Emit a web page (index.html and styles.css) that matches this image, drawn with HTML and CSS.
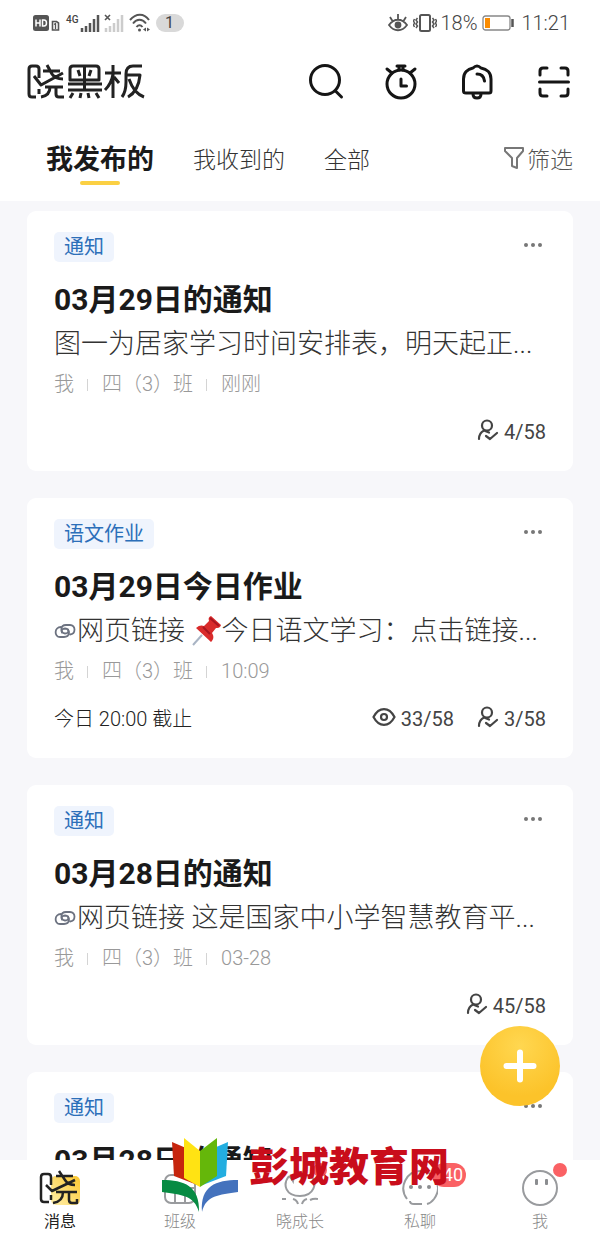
FILE: index.html
```html
<!DOCTYPE html>
<html lang="zh-CN">
<head>
<meta charset="utf-8">
<meta name="viewport" content="width=device-width, initial-scale=1">
<title>晓黑板</title>
<link rel="stylesheet" href="styles.css">
</head>
<body>
<svg class="defs" aria-hidden="true">
  <symbol id="person" viewBox="0 0 22 22"><g fill="none" stroke="currentColor" stroke-width="2.200" stroke-linecap="round" stroke-linejoin="round"><circle cx="10" cy="6.500" r="5"/><path d="M2 20c0-4 2-7 5-8.500l5 2M9 17l4 3 7-6"/></g></symbol>
  <symbol id="eye" viewBox="0 0 24 22"><g fill="none" stroke="currentColor" stroke-width="2.200"><path d="M1.500 11C7 .5 17 .5 22.500 11C17 21.500 7 21.500 1.500 11z"/><circle cx="12" cy="11" r="3"/></g></symbol>
  <symbol id="link" viewBox="0 0 22 18"><g fill="none" stroke="currentColor" stroke-width="1.800" stroke-linecap="round"><path d="M7 5C0 5 0 15 6 15h4c6 0 7-8 1-8.500c-3 0-4 2-3 4"/><path d="M16 12.500c6-.5 6-9.500 0-9.500h-4C6 3 6 11 11 11.500c3 0 4-2 3-4"/></g></symbol>
</svg>

<header class="header">
  <div class="status">
    <div class="status-group">
      <svg width="28" height="20" viewBox="0 0 28 20" fill="none"><rect x="1" y="2" width="16" height="16" rx="2.500" fill="#555"/><path d="M4 6.500v7M8 6.500v7M4 10h4M10.500 7v6h1.500c3.300 0 3.300-6 0-6z" stroke="#fff" stroke-width="1.500"/><path d="M20.500 17V8.500h4L26.500 10v7z" stroke="#555" stroke-width="1.600"/><path d="M22 11.500l1.500-1V16" stroke="#555" stroke-width="1.300"/></svg>
      <span class="net">4G</span>
      <svg width="20" height="20" viewBox="0 0 20 20" stroke="#555" stroke-width="2.500"><path d="M2 19v-4M6 19v-6M10 19V10M14 19V6M18 19V2"/></svg>
      <svg class="sim2" width="20" height="20" viewBox="0 0 20 20"><path d="M2 19v-4M6 19v-6M10 19V10M14 19V6M18 19V2" stroke="#ccc" stroke-width="2.500"/><path d="M1 2l5 5M6 2L1 7" stroke="#555" stroke-width="1.600"/></svg>
      <svg class="wifi" width="22" height="20" viewBox="0 0 22 20" fill="none" stroke="#555" stroke-width="2"><path d="M1 7C7 0 15 0 20 7M4 10.500c4-5 9-5 13 0M7.500 14c2-2.500 4-2.500 6 0"/><circle cx="10.500" cy="17" r="1.500" fill="#555" stroke="none"/><path d="M14 16.500l3-2v4zM21 16.500l-3-2v4z" fill="#555" stroke="none"/></svg>
      <span class="count">1</span>
    </div>
    <div class="status-group">
      <svg width="20" height="20" viewBox="0 0 20 20" fill="none" stroke="#555" stroke-width="1.800"><path d="M1 12C6 5 14 5 19 12C14 19 6 19 1 12zM10 6V1M4.500 8L2 4M15.500 8L18 4"/><circle cx="10" cy="12" r="2.500" fill="#555"/></svg>
      <svg class="vibrate" width="24" height="20" viewBox="0 0 24 20" fill="none" stroke="#555"><rect x="7" y="2" width="10" height="16" rx="1.500" stroke-width="2"/><path d="M4.500 5l-1.500 2 1.500 2-1.500 2 1.500 2-1.500 2M1.500 6L.5 8l1 2-1 2 1 2M19.500 5l1.500 2-1.500 2 1.500 2-1.500 2 1.500 2M22.500 6l1 2-1 2 1 2-1 2" stroke-width="1.500"/></svg>
      <span>18%</span>
      <svg class="battery" width="34" height="18" viewBox="0 0 34 18" fill="none"><rect x="2" y="2" width="27" height="14" rx="2.500" stroke="#888" stroke-width="1.300"/><rect x="4" y="4" width="5" height="10" fill="#fb8c00"/><path d="M31.500 5v8" stroke="#555" stroke-width="2.500"/></svg>
      <time>11:21</time>
    </div>
  </div>
  <div class="appbar">
    <h1 class="brand" aria-label="晓黑板">
      <svg width="119" height="36" viewBox="0 0 119 36" fill="none" stroke="#222" stroke-width="3" stroke-linejoin="round"><path d="M12 14V5Q12 2 9 2H5Q2 2 2 5v25q0 3 3 3h4M7 12l7 9L36 9M12 25v5M16 7h17M20 1l5 9q3 5 11 5M18 23h18M23 23c0 5-3 9-9 10M29 23v7q0 3 3 3h5"/><path d="M43 16V5q0-3 3-3h23q3 0 3 3v11zM57.500 2v23M51 6l2 6M64 6l-2 6M41 20h34M41 26h34M46 29l-3 5M54 29l-1 5M61 29l1 5M69 29l3 5"/><path d="M78 9h16M86 1v33M86 10c-1 7-3 11-8 16M87 13l5 6M115 2h-9q-7 0-7 8v8c0 7-1 11-4 15M99 11h14c-1 11-5 18-12 22M102 15c3 9 7 15 15 18"/></svg>
    </h1>
    <nav class="actions" aria-label="工具">
      <button aria-label="搜索"><svg width="36" height="36" viewBox="0 0 36 36"><circle cx="17" cy="16" r="14.500"/><path d="M27.500 27l6 6"/></svg></button>
      <button aria-label="计时"><svg width="36" height="36" viewBox="0 0 36 36"><circle cx="17" cy="20" r="14"/><path d="M17 15v7h5.500M13 2h8M15 3v3M19 3v3M3 5l5 4M31 5l-5 4"/></svg></button>
      <button aria-label="提醒"><svg width="36" height="36" viewBox="0 0 36 36"><path d="M3.500 27V15c0-6 4-10 9.500-11q4-4 8 0C27 5 31 9 31 15v12q0 2-2 2H6q-2.500 0-2.500-2zM17 10c5 0 7 3 7.500 7M13 30q0 4 4 4t4-4"/></svg></button>
      <button aria-label="扫一扫"><svg width="36" height="36" viewBox="0 0 36 36"><path d="M3.500 18h29M4 11V7q0-3 3-3h4M25 4h4q3 0 3 3v4M4 25v4q0 3 3 3h4M25 32h4q3 0 3-3v-4"/></svg></button>
    </nav>
  </div>
  <div class="tabs">
    <button class="tab active">我发布的</button>
    <button class="tab">我收到的</button>
    <button class="tab">全部</button>
    <button class="filter"><svg width="22" height="24" viewBox="0 0 22 24" fill="none" stroke="#777" stroke-width="2" stroke-linejoin="round"><path d="M2 2h18v3l-6 7v10l-5-2v-8L2 5z"/></svg>筛选</button>
  </div>
</header>

<main class="feed">
  <article class="card">
    <div class="card-top"><span class="tag">通知</span><button class="more" aria-label="更多"><i></i><i></i><i></i></button></div>
    <h2>03月29日的通知</h2>
    <p class="excerpt">图一为居家学习时间安排表，明天起正...</p>
    <p class="meta"><span>我</span><span>四（3）班</span><span>刚刚</span></p>
    <div class="stats"><span class="stat"><svg width="22" height="22"><use href="#person"/></svg>4/58</span></div>
  </article>
  <article class="card">
    <div class="card-top"><span class="tag">语文作业</span><button class="more" aria-label="更多"><i></i><i></i><i></i></button></div>
    <h2>03月29日今日作业</h2>
    <p class="excerpt"><a href="#"><svg width="22" height="18"><use href="#link"/></svg>网页链接</a> <svg class="pin" width="30" height="32" viewBox="0 0 30 32"><path d="M10 20L1 30" stroke="#a9b4c4" stroke-width="2"/><path d="M4 13c3-3 6-3 8-2l5-5c-1-3 0-4 2-5l10 9c-1 3-3 3-5 3l-4 5c2 3 2 6-1 9z" fill="#d92b2b"/><path d="M11 12l7 7M18 3l9 8" stroke="#a91620" stroke-width="2"/></svg>今日语文学习：点击链接...</p>
    <p class="meta"><span>我</span><span>四（3）班</span><span>10:09</span></p>
    <div class="stats"><span class="due">今日 20:00 截止</span><span class="stat"><svg width="24" height="22"><use href="#eye"/></svg>33/58</span><span class="stat"><svg width="22" height="22"><use href="#person"/></svg>3/58</span></div>
  </article>
  <article class="card">
    <div class="card-top"><span class="tag">通知</span><button class="more" aria-label="更多"><i></i><i></i><i></i></button></div>
    <h2>03月28日的通知</h2>
    <p class="excerpt"><a href="#"><svg width="22" height="18"><use href="#link"/></svg>网页链接</a> 这是国家中小学智慧教育平...</p>
    <p class="meta"><span>我</span><span>四（3）班</span><span>03-28</span></p>
    <div class="stats"><span class="stat"><svg width="22" height="22"><use href="#person"/></svg>45/58</span></div>
  </article>
  <article class="card">
    <div class="card-top"><span class="tag">通知</span><button class="more" aria-label="更多"><i></i><i></i><i></i></button></div>
    <h2>03月28日的通知</h2>
  </article>
</main>

<button class="fab" aria-label="新建"><svg width="34" height="34" viewBox="0 0 34 34"><path d="M17 3.500v27M3.500 17h27" stroke="#fff" stroke-width="6" stroke-linecap="round"/></svg></button>

<nav class="tabbar" aria-label="主导航">
  <a class="current" href="#"><span class="icon"><svg width="42" height="38" viewBox="0 0 42 38" fill="none" stroke="#222" stroke-width="2.500" stroke-linejoin="round"><defs><linearGradient id="gold" x1="0" y1="1" x2="1" y2="0"><stop offset="0" stop-color="#fff0ad"/><stop offset="1" stop-color="#fbc62e"/></linearGradient></defs><rect x="12" y="7" width="29" height="29" rx="5" fill="url(#gold)" stroke="none"/><path d="M12 16V8q0-3-3-3H5Q2 5 2 8v22q0 3 3 3h5M7 16l6 6 23-11M12 26v5M17 7h17M20 2l6 9q3 5 10 5M17 23h21M24 23c0 6-3 10-10 11M30 23v8q0 3 3 3h5v-4"/></svg></span>消息</a>
  <a href="#"><span class="icon"><svg width="36" height="36" viewBox="0 0 36 36"><rect x="3" y="5" width="30" height="28" rx="6"/><path d="M3 18h30M13 18v15M23 18v15"/></svg></span>班级</a>
  <a href="#"><span class="icon"><svg width="36" height="36" viewBox="0 0 36 36"><path d="M7 6C0 15 4 26 18 26S36 13 29 6M7 6q3 3 4 5q1-6 6-9q1 5 5 8M11 29q4 1 5 5M20 34q1-4 5-5M28 30q4-2 8-1M0 29h4"/></svg><b class="dot inner"></b></span>晓成长</a>
  <a href="#"><span class="icon"><svg width="36" height="36" viewBox="0 0 36 36"><path d="M5 29C-4 17 5 1 18 1s24 14 14 28q-3 4-7 5M8 31q0 3 4 3h8"/><g class="solid"><circle cx="9" cy="17" r="2"/><circle cx="18" cy="17" r="2"/><circle cx="27" cy="17" r="2"/></g></svg><b class="badge">40</b></span>私聊</a>
  <a href="#"><span class="icon"><svg width="36" height="36" viewBox="0 0 36 36"><circle cx="18" cy="18" r="17"/><g class="solid"><rect x="13" y="9" width="3" height="6" rx="1"/><rect x="23" y="9" width="3" height="6" rx="1"/></g></svg><b class="dot"></b></span>我</a>
</nav>

<div class="watermark">
  <svg width="76" height="74" viewBox="0 0 76 74"><path d="M10 4l28 12v32L12 38z" fill="#c6250d"/><path d="M66 4L38 16v32l26-10z" fill="#23aee0"/><path d="M22 0l16 13v36L22 40z" fill="#ffe313"/><path d="M55 0L38 13v36l17-11z" fill="#65b70a"/><path d="M0 42c22 0 38 6 37 32C32 57 20 57 0 54z" fill="#078b43"/><path d="M76 42c-22 0-38 6-36 32C44 57 57 57 76 54z" fill="#4472bd"/></svg>
  <span>彭城教育网</span>
</div>
</body>
</html>
```
FILE: styles.css
```css
* { box-sizing: border-box; }
body {
  margin: 0;
  height: 100vh;
  display: flex;
  flex-direction: column;
  position: relative;
  overflow: hidden;
  background: #f7f7fa;
  color: #333;
  font-family: Roboto, "Noto Sans CJK SC", sans-serif;
  font-weight: 300;
}
button { border: 0; padding: 0; background: none; font: inherit; color: inherit; cursor: pointer; }
a { color: inherit; text-decoration: none; }
h1, h2, p { margin: 0; }
svg { display: block; flex: none; }
.defs { position: absolute; width: 0; height: 0; }

.header { background: #fff; flex: none; }
.status {
  display: flex;
  justify-content: space-between;
  height: 46px;
  padding: 0 30px 0 32px;
  font-size: 20px;
  color: #444;
}
.status-group { display: flex; align-items: center; }
.net { margin: 0 1px 8px 6px; font-size: 10px; font-weight: 500; }
.sim2 { margin-left: 4px; }
.wifi { margin-left: 5px; }
.count {
  margin-left: 5px;
  width: 28px;
  border-radius: 9px;
  background: #d9d9d9;
  font-size: 16px;
  font-weight: 400;
  line-height: 18px;
  text-align: center;
}
.vibrate { margin: 0 3px 0 5px; }
.battery { margin: 0 6px 0 4px; }

.appbar {
  display: flex;
  align-items: center;
  justify-content: space-between;
  height: 72px;
  padding: 0 28px 0 27px;
}
.actions { display: flex; gap: 40px; }
.actions svg { fill: none; stroke: #151515; stroke-width: 3; stroke-linecap: round; stroke-linejoin: round; }

.tabs {
  display: flex;
  align-items: center;
  gap: 39px;
  height: 83px;
  padding: 0 27px 4px 46px;
  font-size: 23px;
}
.tab { height: 79px; }
.tab.active { position: relative; color: #1a1a1a; font-size: 27px; font-weight: 700; }
.tab.active::after {
  content: "";
  position: absolute;
  left: 50%;
  bottom: 12px;
  width: 40px;
  height: 4px;
  margin-left: -20px;
  border-radius: 2px;
  background: #fbd043;
}
.filter { display: flex; align-items: center; gap: 2px; margin-left: auto; color: #555; }

.feed {
  flex: 1;
  min-height: 0;
  overflow: hidden;
  display: flex;
  flex-direction: column;
  gap: 27px;
  padding: 10px 27px 0;
}
.card { flex: none; min-height: 260px; padding: 21px 27px 24px; border-radius: 9px; background: #fff; }
.card-top { display: flex; justify-content: space-between; align-items: flex-start; margin-bottom: 16px; }
.tag { padding: 0 10px; border-radius: 5px; background: #eff4fd; color: #2c6fb9; font-size: 20px; font-weight: 400; line-height: 30px; }
.more { display: flex; gap: 3px; padding: 11px 4px; }
.more i { width: 4px; height: 4px; border-radius: 50%; background: #777; }
.card h2 { color: #1a1a1a; font-size: 30px; font-weight: 700; line-height: 44px; }
.excerpt { font-size: 27px; line-height: 44px; white-space: nowrap; }
.excerpt svg { display: inline-block; vertical-align: middle; margin-top: -4px; }
.excerpt a svg { margin-right: 1px; color: #6c7280; }
.meta { display: flex; color: #999; font-size: 20px; line-height: 36px; }
.meta span + span::before {
  content: "";
  display: inline-block;
  width: 1px;
  height: 12px;
  margin: 0 14px 0 13px;
  background: #d4d4d4;
}
.stats {
  display: flex;
  justify-content: flex-end;
  gap: 23px;
  margin-top: 15px;
  color: #444;
  font-size: 20px;
  font-weight: 400;
  line-height: 30px;
}
.due { margin-right: auto; font-weight: 300; color: #222; }
.stat { display: flex; gap: 5px; }
.stat svg { margin-top: 2px; }

.fab {
  position: absolute;
  right: 40px;
  bottom: 140px;
  width: 80px;
  height: 80px;
  border-radius: 50%;
  background: radial-gradient(circle at 50% 25%, #ffd750, #fcc32a 70%);
  display: grid;
  place-items: center;
}

.tabbar { flex: none; display: grid; grid-template-columns: repeat(5, 1fr); height: 86px; background: #fff; }
.tabbar a {
  display: flex;
  flex-direction: column;
  align-items: center;
  padding-top: 6px;
  color: #888;
  font-size: 16px;
  line-height: 24px;
}
.tabbar .current { color: #222; font-weight: 400; }
.icon { position: relative; height: 44px; display: grid; place-items: center; }
.icon > svg { fill: none; }
.tabbar a:not(.current) svg { stroke: #999b9e; stroke-width: 2; }
.solid { fill: #8b8d90; stroke: none; }
.dot { position: absolute; top: -3px; right: -9px; width: 14px; height: 14px; border-radius: 50%; background: #fa6164; }
.badge {
  position: absolute;
  top: -3px;
  left: 30px;
  width: 34px;
  padding-right: 3px;
  border-radius: 12px;
  background: #fa6164;
  color: #fff;
  font-size: 18px;
  font-weight: 400;
  line-height: 24px;
  text-align: right;
}

.watermark {
  position: absolute;
  left: 162px;
  bottom: 34px;
  display: flex;
  gap: 11px;
  color: #c90d1b;
  font-size: 40px;
  font-weight: 900;
  line-height: 60px;
  pointer-events: none;
}
```
